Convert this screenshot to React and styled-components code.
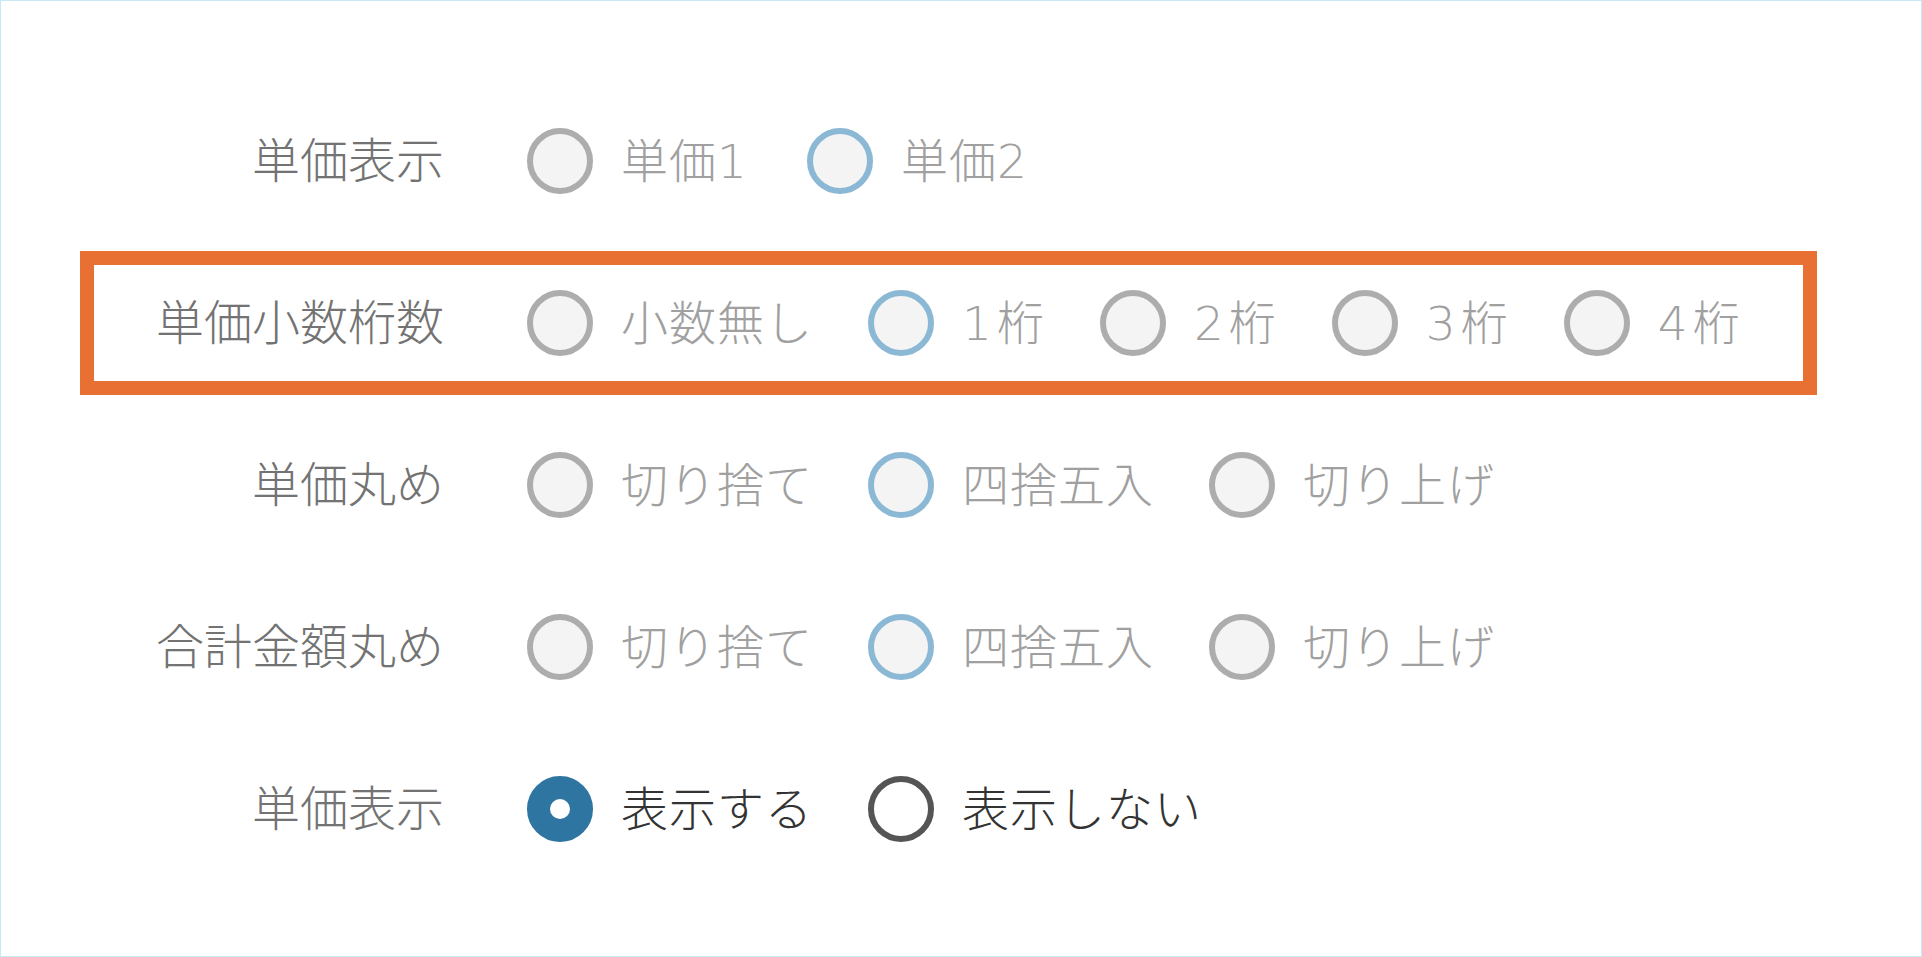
import React from "react"
import styled, { createGlobalStyle } from "styled-components"

const rows = [
  {
    label: "単価表示",
    options: [
      { text: "単価1", state: "off" },
      { text: "単価2", state: "hint" },
    ],
  },
  {
    label: "単価小数桁数",
    highlight: true,
    options: [
      { text: "小数無し", state: "off" },
      { text: "1桁", state: "hint" },
      { text: "2桁", state: "off" },
      { text: "3桁", state: "off" },
      { text: "4桁", state: "off" },
    ],
  },
  {
    label: "単価丸め",
    options: [
      { text: "切り捨て", state: "off" },
      { text: "四捨五入", state: "hint" },
      { text: "切り上げ", state: "off" },
    ],
  },
  {
    label: "合計金額丸め",
    options: [
      { text: "切り捨て", state: "off" },
      { text: "四捨五入", state: "hint" },
      { text: "切り上げ", state: "off" },
    ],
  },
  {
    label: "単価表示",
    options: [
      { text: "表示する", state: "checked" },
      { text: "表示しない", state: "empty" },
    ],
  },
]

// digits in the original font run wider than in ours, so they get a little room
const renderText = (text) =>
  text.split(/(\d+)/).map((part, k) =>
    /^\d+$/.test(part) ? <Num key={k}>{part}</Num> : part
  )

const App = () => {
  return (
    <>
      <GlobalStyle />
      <Page>
        {rows.map((row, i) => (
          <Row key={i} $highlight={row.highlight}>
            <Label>{row.label}</Label>
            <Options>
              {row.options.map((opt, j) => (
                <Option key={j}>
                  <Circle $state={opt.state} />
                  <OptionText $active={opt.state === "checked" || opt.state === "empty"}>
                    {renderText(opt.text)}
                  </OptionText>
                </Option>
              ))}
            </Options>
          </Row>
        ))}
      </Page>
    </>
  )
}

export default App

const GlobalStyle = createGlobalStyle`
  html, body {
    margin: 0;
    padding: 0;
    background: #ffffff;
  }
  body {
    font-family: "DejaVu Sans", "Noto Sans CJK JP", sans-serif;
    font-weight: 300;
  }
`

const Page = styled.div`
  box-sizing: border-box;
  width: 1922px;
  height: 957px;
  border: 1px solid #c6eaf5;
  padding: 88px 0 0 79px;
  display: flex;
  flex-direction: column;
  gap: 18px;
  background: #ffffff;
`

const Row = styled.div`
  box-sizing: border-box;
  width: 1737px;
  height: 144px;
  border: 14px solid ${(p) => (p.$highlight ? "#e87033" : "transparent")};
  display: flex;
  align-items: center;
`

const Label = styled.div`
  width: 350px;
  flex-shrink: 0;
  text-align: right;
  font-size: 48px;
  color: #737373;
  line-height: 1;
  white-space: nowrap;
`

const Options = styled.div`
  display: flex;
  align-items: center;
  gap: 55px;
  margin-left: 83px;
`

const Option = styled.label`
  display: flex;
  align-items: center;
  gap: 28px;
  cursor: pointer;
`

const circleBorder = {
  off: "#adadad",
  hint: "#8bb8d4",
  empty: "#555555",
  checked: "#2e75a2",
}

const circleFill = {
  off: "#f4f4f4",
  hint: "#f4f4f4",
  empty: "#ffffff",
  checked: "#2e75a2",
}

const Circle = styled.span`
  box-sizing: border-box;
  width: 66px;
  height: 66px;
  border-radius: 50%;
  flex-shrink: 0;
  border: 6px solid ${(p) => circleBorder[p.$state]};
  background: ${(p) => circleFill[p.$state]};
  position: relative;

  &::after {
    content: "";
    display: ${(p) => (p.$state === "checked" ? "block" : "none")};
    position: absolute;
    left: 50%;
    top: 50%;
    width: 20px;
    height: 20px;
    margin: -10px 0 0 -10px;
    border-radius: 50%;
    background: #ffffff;
  }
`

const OptionText = styled.span`
  font-size: 47px;
  line-height: 1;
  letter-spacing: 1px;
  white-space: nowrap;
  color: ${(p) => (p.$active ? "#333333" : "#a0a0a0")};
`

const Num = styled.span`
  margin-right: 4px;
`
